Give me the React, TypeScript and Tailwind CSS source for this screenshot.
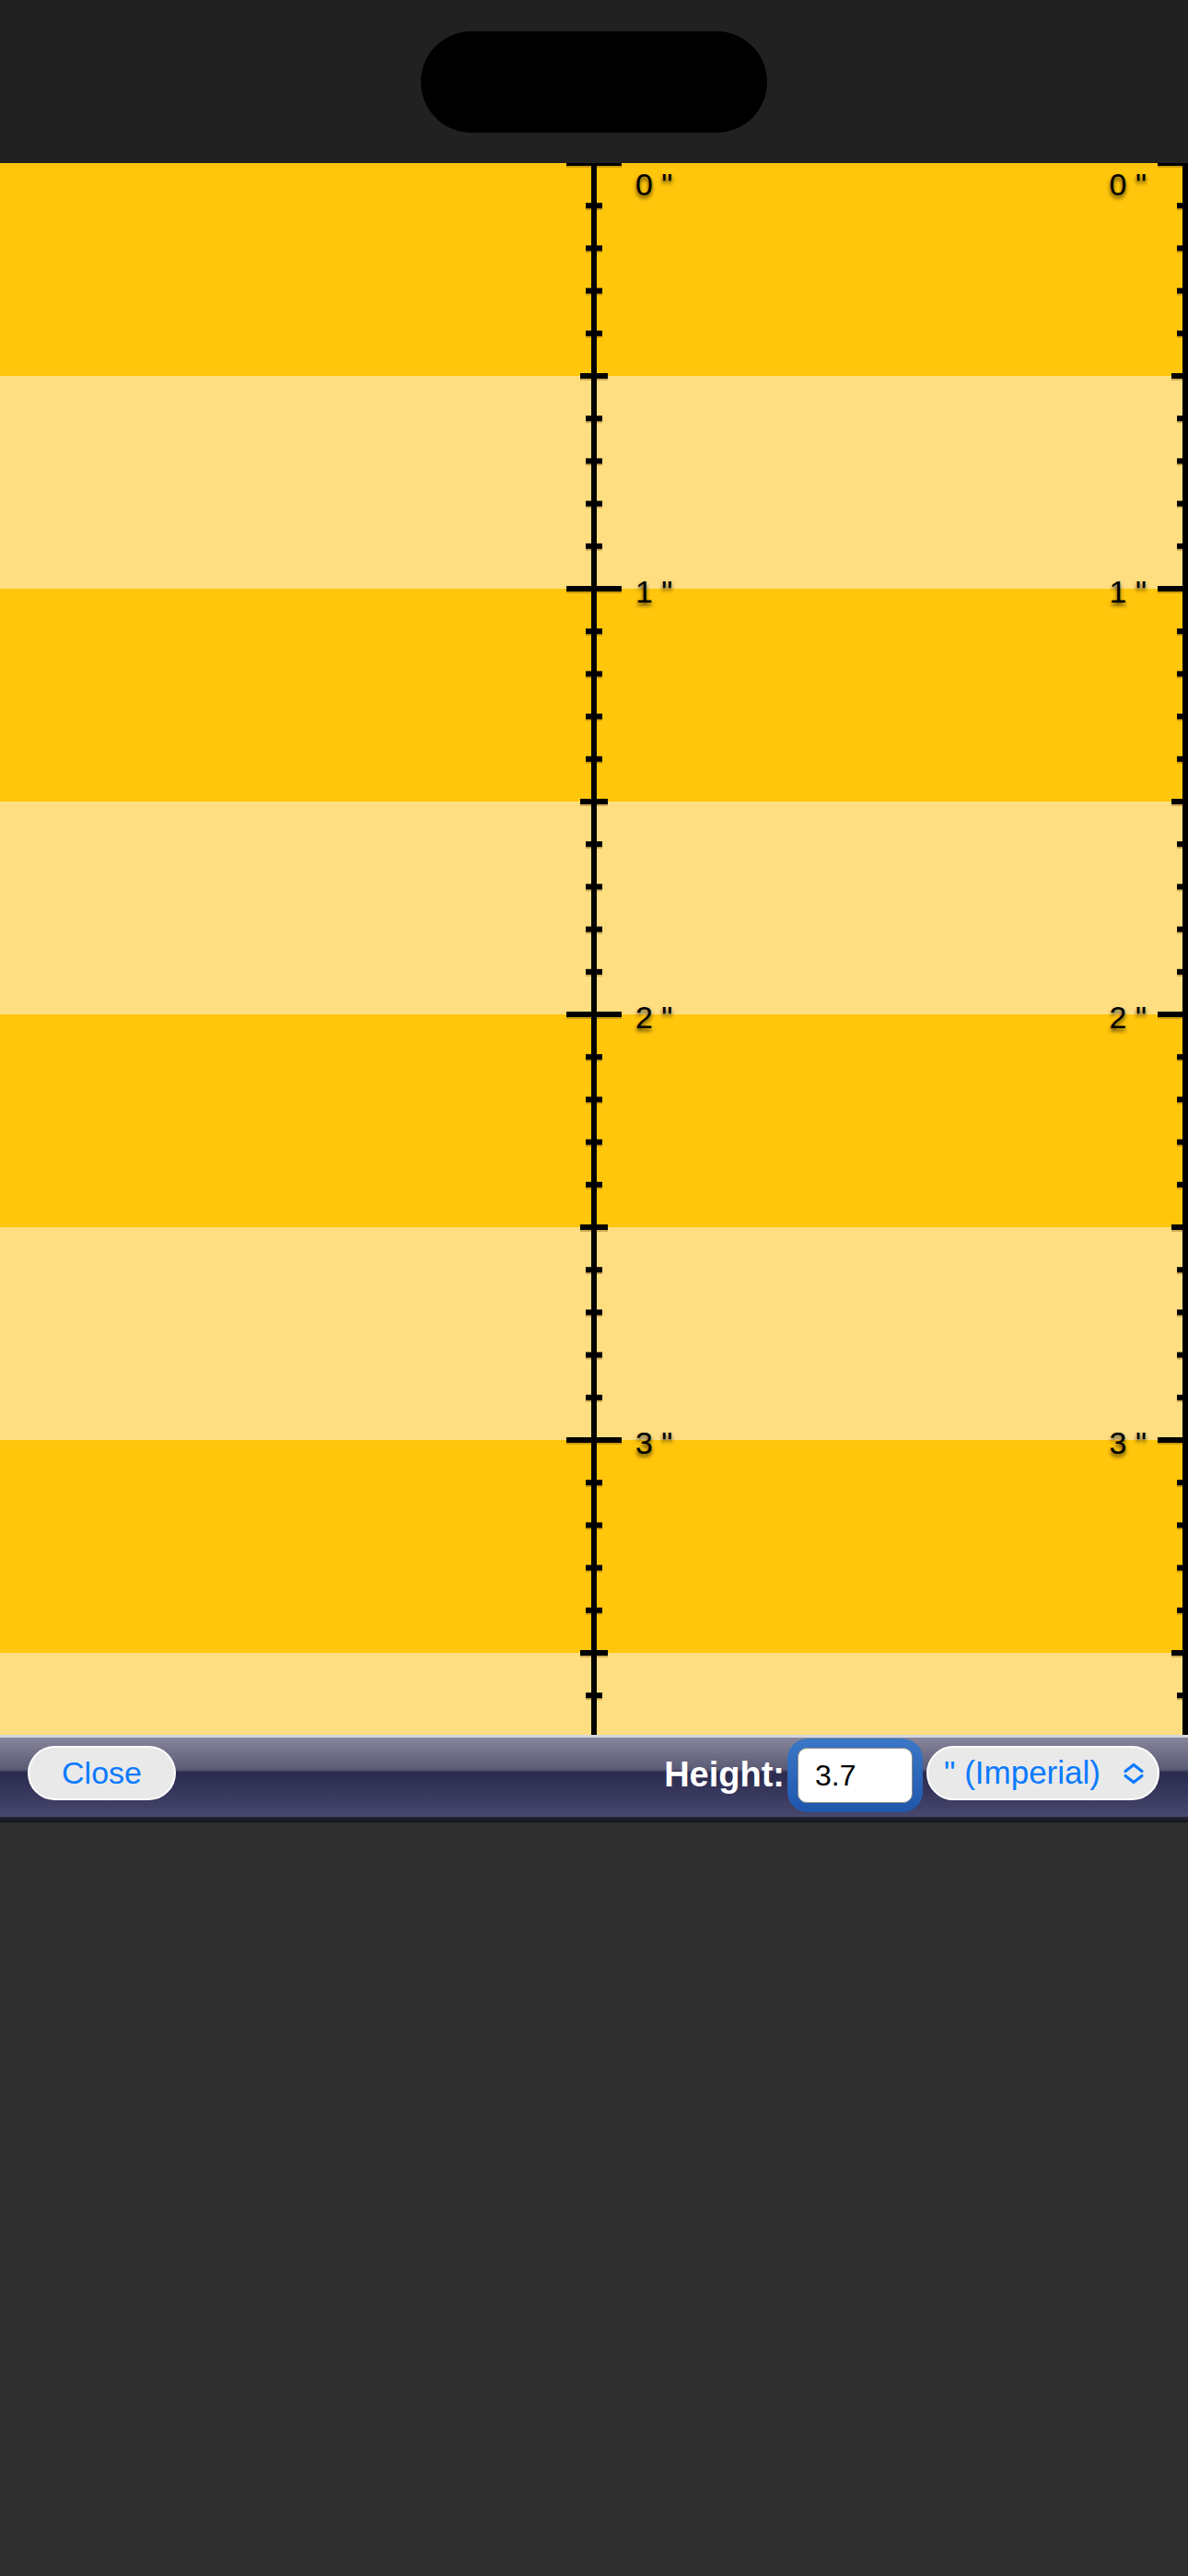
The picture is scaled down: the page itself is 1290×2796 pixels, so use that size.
import React from 'react'

// Geometry of the ruler (pixels per inch, visible length)
const PX_PER_INCH = 462
const STEP = PX_PER_INCH / 10
const RULER_H = 1706

const bands = Array.from({ length: 8 }, (_, i) => i)
const ticks = Array.from({ length: 38 }, (_, i) => i)
const inches = [0, 1, 2, 3]

const tickLen = (i: number) => (i % 10 === 0 ? 60 : i % 5 === 0 ? 30 : 18)

function RulerMarks() {
  const lines = [645, 1287]
  return (
    <svg className="absolute inset-0" width={1290} height={RULER_H} viewBox={`0 0 1290 ${RULER_H}`}>
      {lines.map((cx) => (
        <g key={cx}>
          {ticks.map((i) => {
            const y = i * STEP
            const len = tickLen(i)
            return (
              <g key={i}>
                <rect x={cx - len / 2} y={y - 1} width={len} height={6} fill="rgba(120,80,0,0.35)" />
                <rect x={cx - len / 2} y={y - 3} width={len} height={6} fill="#000" />
              </g>
            )
          })}
          <rect x={cx - 3} y={0} width={6} height={RULER_H} fill="#000" />
        </g>
      ))}
    </svg>
  )
}

function Label({ n, side }: { n: number; side: 'left' | 'right' }) {
  const top = n === 0 ? 6 : n * PX_PER_INCH - 14
  return (
    <div
      className={
        'absolute text-[34px] leading-[34px] text-black [text-shadow:0_3px_4px_rgba(0,0,0,0.7)] ' +
        (side === 'left' ? 'left-[690px]' : 'right-[45px]')
      }
      style={{ top }}
    >
      {n} &quot;
    </div>
  )
}

function ChevronUpDown() {
  return (
    <svg width="24" height="24" viewBox="0 0 24 24" fill="none" stroke="#0a7aff" strokeWidth="3.2" strokeLinecap="round" strokeLinejoin="round">
      <polyline points="3,9.5 12,2.5 21,9.5" />
      <polyline points="3,14.5 12,21.5 21,14.5" />
    </svg>
  )
}

export default function App() {
  return (
    <div className="flex min-h-[2796px] w-[1290px] flex-col bg-[#2f2f2f] font-['Liberation_Sans',Arial,sans-serif]">
      {/* Barre d'état ------------------------------------------------------ */}
      <div className="flex h-[177px] justify-center bg-[#212121]">
        <div className="mt-[34px] h-[110px] w-[376px] rounded-full bg-black" />
      </div>

      {/* Règle ------------------------------------------------------------- */}
      <div className="relative h-[1706px] overflow-hidden">
        <div className="flex flex-col">
          {bands.map((b) => (
            <div key={b} className={'h-[231px] shrink-0 ' + (b % 2 === 0 ? 'bg-[#ffc60b]' : 'bg-[#ffde82]')} />
          ))}
        </div>
        <RulerMarks />
        {inches.map((n) => (
          <React.Fragment key={n}>
            <Label n={n} side="left" />
            <Label n={n} side="right" />
          </React.Fragment>
        ))}
      </div>

      {/* Barre d'outils ---------------------------------------------------- */}
      <div className="border-t-[3px] border-[#d6d6de]">
        <div className="flex h-[86px] items-start justify-between bg-[linear-gradient(to_bottom,#86859a_0%,#5c5b76_40%,#2b2b4f_44%,#3a3a60_75%,#48486e_100%)] pl-[30px] pr-[31px] pt-[9px]">
          <button className="flex h-[59px] w-[161px] items-center justify-center rounded-full border-2 border-white bg-[#e9e9e9] text-[34px] text-[#0a7aff]">
            Close
          </button>
          <div className="flex items-start">
            <span className="mr-[3px] mt-[2px] h-[59px] text-[38px] font-bold leading-[59px] text-white">Height:</span>
            <div className="-mt-[8px] rounded-[22px] bg-[linear-gradient(to_bottom,#3b78c6,#1f56ac)] px-[11px] py-[10px]">
              <div className="flex h-[60px] w-[125px] items-center rounded-[10px] border border-[#8a8a8a] bg-white pl-[18px] text-[32px] text-black">
                3.7
              </div>
            </div>
            <div className="ml-[4px] flex h-[59px] w-[253px] items-center rounded-full border-2 border-white bg-[#e9e9e9] pl-[17px] pr-[14px] text-[35px] text-[#0a7aff]">
              <span className="flex-1">&quot; (Imperial)</span>
              <ChevronUpDown />
            </div>
          </div>
        </div>
        <div className="h-[6px] bg-[linear-gradient(to_bottom,#262636,#141420)]" />
      </div>

      <div className="flex-1 bg-[#2f2f2f]" />
    </div>
  )
}
